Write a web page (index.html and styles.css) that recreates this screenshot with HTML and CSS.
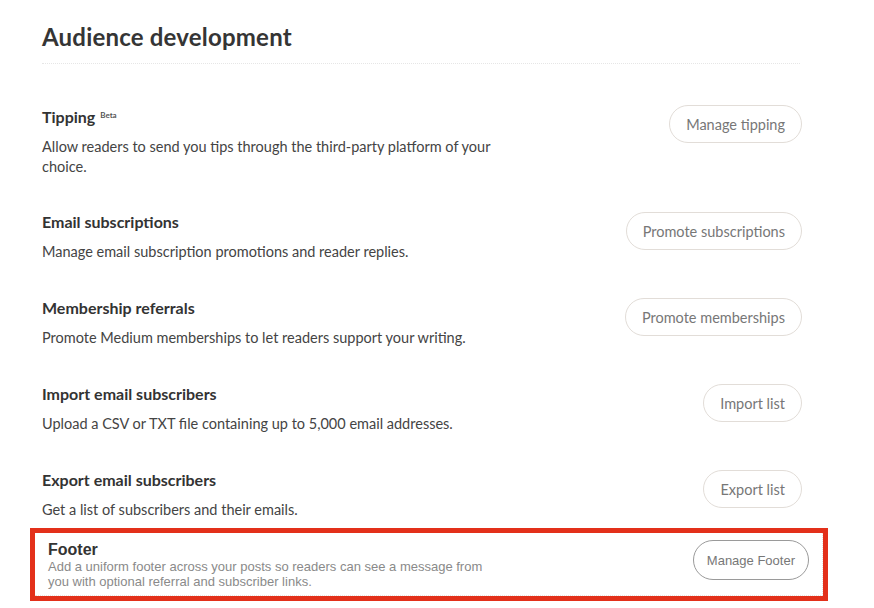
FILE: index.html
```html
<!DOCTYPE html>
<html lang="en">
<head>
<meta charset="utf-8">
<title>Audience development</title>
<link rel="stylesheet" href="styles.css">
</head>
<body>
<main class="page">
  <h1 class="page-title">Audience development</h1>
  <div class="rule"></div>
  <section class="rows">
    <div class="row">
      <div class="info">
        <h2 class="row-title">Tipping <span class="beta">Beta</span></h2>
        <p class="row-desc">Allow readers to send you tips through the third-party platform of your choice.</p>
      </div>
      <button class="pill">Manage tipping</button>
    </div>
    <div class="row">
      <div class="info">
        <h2 class="row-title">Email subscriptions</h2>
        <p class="row-desc">Manage email subscription promotions and reader replies.</p>
      </div>
      <button class="pill">Promote subscriptions</button>
    </div>
    <div class="row">
      <div class="info">
        <h2 class="row-title">Membership referrals</h2>
        <p class="row-desc">Promote Medium memberships to let readers support your writing.</p>
      </div>
      <button class="pill">Promote memberships</button>
    </div>
    <div class="row">
      <div class="info">
        <h2 class="row-title">Import email subscribers</h2>
        <p class="row-desc">Upload a CSV or TXT file containing up to 5,000 email addresses.</p>
      </div>
      <button class="pill">Import list</button>
    </div>
    <div class="row">
      <div class="info">
        <h2 class="row-title">Export email subscribers</h2>
        <p class="row-desc">Get a list of subscribers and their emails.</p>
      </div>
      <button class="pill">Export list</button>
    </div>
  </section>
  <section class="footer-box">
    <div class="footer-inner">
      <div class="footer-info">
        <h2 class="footer-title">Footer</h2>
        <p class="footer-desc">Add a uniform footer across your posts so readers can see a message from you with optional referral and subscriber links.</p>
      </div>
      <button class="footer-btn">Manage Footer</button>
    </div>
  </section>
</main>
</body>
</html>
```

FILE: styles.css
```css
* { box-sizing: border-box; }
html, body { margin: 0; padding: 0; background: #fff; }
body {
  font-family: Lato, "Noto Sans", sans-serif;
  color: #333;
}
.page {
  padding: 20px 0 0 0;
  width: 874px;
}
.page-title {
  margin: 0 0 0 42px;
  font-size: 24px;
  line-height: 34px;
  font-weight: 700;
  color: #353535;
  letter-spacing: 0.2px;
}
.rule {
  margin: 9px 0 0 42px;
  width: 758px;
  border-top: 1px dotted #e6e6e6;
}
.rows {
  margin: 41px 0 0 42px;
  width: 760px;
}
.row {
  display: flex;
  justify-content: space-between;
  align-items: flex-start;
  margin-bottom: 36px;
}
.row:first-child { margin-bottom: 35px; }
.row:last-child { margin-bottom: 0; }
.info { width: 470px; }
.row-title {
  margin: 0;
  font-size: 16px;
  line-height: 20px;
  font-weight: 700;
  color: #333;
}
.beta {
  font-size: 8px;
  font-weight: 700;
  color: #555;
  vertical-align: 5px;
  margin-left: 1px;
}
.row-desc {
  margin: 10px 0 0 0;
  font-size: 14.5px;
  line-height: 20px;
  color: #444;
}
.pill {
  height: 38px;
  padding: 0 16px;
  border: 1px solid #e2ddd8;
  border-radius: 19px;
  background: #fff;
  font-family: Lato, "Noto Sans", sans-serif;
  font-size: 14.5px;
  color: #777;
  white-space: nowrap;
}
.footer-box {
  margin: 8px 0 0 30px;
  width: 798px;
  height: 73px;
  border: 5px solid #e3301a;
}
.footer-inner {
  height: 100%;
  display: flex;
  justify-content: space-between;
  align-items: flex-start;
  padding: 8px 13px 0 13px;
  border-right: 1px dotted #e8e4e0;
  border-bottom: 1px dotted #e8e4e0;
  font-family: "Liberation Sans", Arial, sans-serif;
}
.footer-info { width: 450px; }
.footer-title {
  margin: 0;
  font-size: 16px;
  line-height: 18px;
  font-weight: 700;
  color: #333;
}
.footer-desc {
  margin: 0;
  font-size: 13px;
  line-height: 15px;
  color: #8a8a8a;
}
.footer-btn {
  margin-top: -1px;
  height: 40px;
  padding: 0 13px;
  border: 1px solid #9a9a9a;
  border-radius: 20px;
  background: #fff;
  font-family: "Liberation Sans", Arial, sans-serif;
  font-size: 13px;
  color: #777;
}
```
